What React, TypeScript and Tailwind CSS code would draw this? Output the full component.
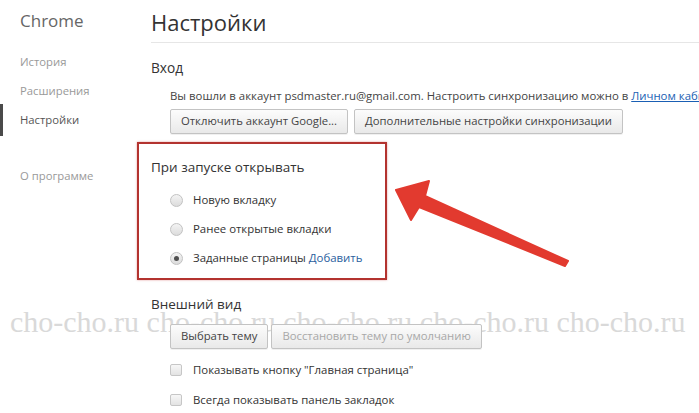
import React from "react";

function Btn({ children, disabled }: { children: React.ReactNode; disabled?: boolean }) {
  return (
    <div
      className={`h-[25px] px-[10px] flex items-center rounded-[2px] border border-[#c3c3c3] bg-gradient-to-b from-[#fcfcfc] to-[#e9e9e9] text-[11.3px] whitespace-nowrap shadow-[0_1px_0_rgba(0,0,0,0.06)] ${
        disabled ? "text-[#a8a8a8]" : "text-[#444]"
      }`}
    >
      {children}
    </div>
  );
}

function Radio({ checked, children }: { checked?: boolean; children: React.ReactNode }) {
  return (
    <div className="h-[29px] flex items-center">
      <div className="w-[13px] h-[13px] rounded-full border border-[#c2c2c2] bg-gradient-to-b from-[#f4f4f4] to-[#dcdcdc] flex items-center justify-center">
        {checked && <div className="w-[5px] h-[5px] rounded-full bg-[#4f4f4f]" />}
      </div>
      <div className="ml-[10px] text-[11.4px] text-[#333] whitespace-nowrap">{children}</div>
    </div>
  );
}

function Check({ children }: { children: React.ReactNode }) {
  return (
    <div className="h-[30px] flex items-center">
      <div className="w-[12px] h-[12px] rounded-[2px] border border-[#c6c6c6] bg-gradient-to-b from-[#f7f7f7] to-[#e3e3e3]" />
      <div className="ml-[11px] text-[11.4px] text-[#333] whitespace-nowrap">{children}</div>
    </div>
  );
}

export default function App() {
  return (
    <div
      className="relative w-[699px] h-[413px] overflow-hidden bg-white flex"
      style={{ fontFamily: '"Open Sans", "Noto Sans", sans-serif' }}
    >
      {/* watermark (behind content) */}
      <div
        className="absolute left-[10px] top-[302px] text-[30px] leading-[40px] text-[#d9d9d9] whitespace-nowrap z-0"
        style={{ fontFamily: '"Liberation Serif", serif' }}
      >
        cho-cho.ru cho-cho.ru cho-cho.ru cho-cho.ru cho-cho.ru
      </div>

      {/* sidebar */}
      <div className="relative z-10 w-[151px] shrink-0 flex flex-col">
        <div className="mt-[10px] pl-[20px] h-[22px] leading-[22px] text-[17px] text-[#666]">Chrome</div>
        <div className="mt-[15.5px] pl-[20px] h-[29px] flex items-center text-[11.3px] text-[#999]">История</div>
        <div className="pl-[20px] h-[29px] flex items-center text-[11.3px] text-[#999]">Расширения</div>
        <div className="-my-[1.5px] pl-[17px] h-[32px] flex items-center text-[11.3px] text-[#555] border-l-[3px] border-[#4a4a4a]">
          Настройки
        </div>
        <div className="mt-[27px] pl-[20px] h-[29px] flex items-center text-[11.3px] text-[#999]">О программе</div>
      </div>

      {/* content */}
      <div className="relative z-10 flex-1 flex flex-col">
        <div className="mt-[8px] h-[28px] leading-[28px] text-[22px] text-[#333]">Настройки</div>
        <div className="mt-[6px] border-t border-[#e6e6e6]" />

        <div className="mt-[15px] h-[20px] leading-[20px] text-[13.7px] text-[#333]">Вход</div>
        <div className="pl-[19px] flex flex-col">
          <div className="mt-[9px] h-[18px] leading-[18px] text-[11.4px] text-[#444] whitespace-nowrap">
            Вы вошли в аккаунт psdmaster.ru@gmail.com. Настроить синхронизацию можно в{" "}
            <span className="text-[#1a5fb4] underline">Личном кабинете</span>
          </div>
          <div className="mt-[4px] flex gap-[6px]">
            <Btn>Отключить аккаунт Google...</Btn>
            <Btn>Дополнительные настройки синхронизации</Btn>
          </div>
        </div>

        <div className="mt-[22.5px] h-[20px] leading-[20px] text-[13.5px] text-[#333]">При запуске открывать</div>
        <div className="mt-[9px] pl-[19px] flex flex-col">
          <Radio>Новую вкладку</Radio>
          <Radio>Ранее открытые вкладки</Radio>
          <Radio checked>
            Заданные страницы <span className="text-[#2a5e9e]">Добавить</span>
          </Radio>
        </div>

        <div className="mt-[21.5px] h-[20px] leading-[20px] text-[13.5px] text-[#333]">Внешний вид</div>
        <div className="pl-[19px] flex flex-col">
          <div className="mt-[10px] flex gap-[3px]">
            <Btn>Выбрать тему</Btn>
            <Btn disabled>Восстановить тему по умолчанию</Btn>
          </div>
          <div className="mt-[6px] flex flex-col">
            <Check>Показывать кнопку "Главная страница"</Check>
            <Check>Всегда показывать панель закладок</Check>
          </div>
        </div>
      </div>

      {/* annotation: red box */}
      <div className="absolute z-20 left-[137px] top-[142px] w-[250px] h-[138px] border-[2px] border-[#b3332f] shadow-[0_0_2px_rgba(200,60,60,0.5)] pointer-events-none" />

      {/* annotation: arrow */}
      <svg className="absolute z-20 left-0 top-0 pointer-events-none" width="699" height="413" viewBox="0 0 699 413">
        <polygon
          points="396,190 429,181 425,196 568,261 565,266 419,207 411,220"
          fill="#e23a2f"
          stroke="#e23a2f"
          strokeWidth="2"
          strokeLinejoin="round"
        />
      </svg>
    </div>
  );
}
